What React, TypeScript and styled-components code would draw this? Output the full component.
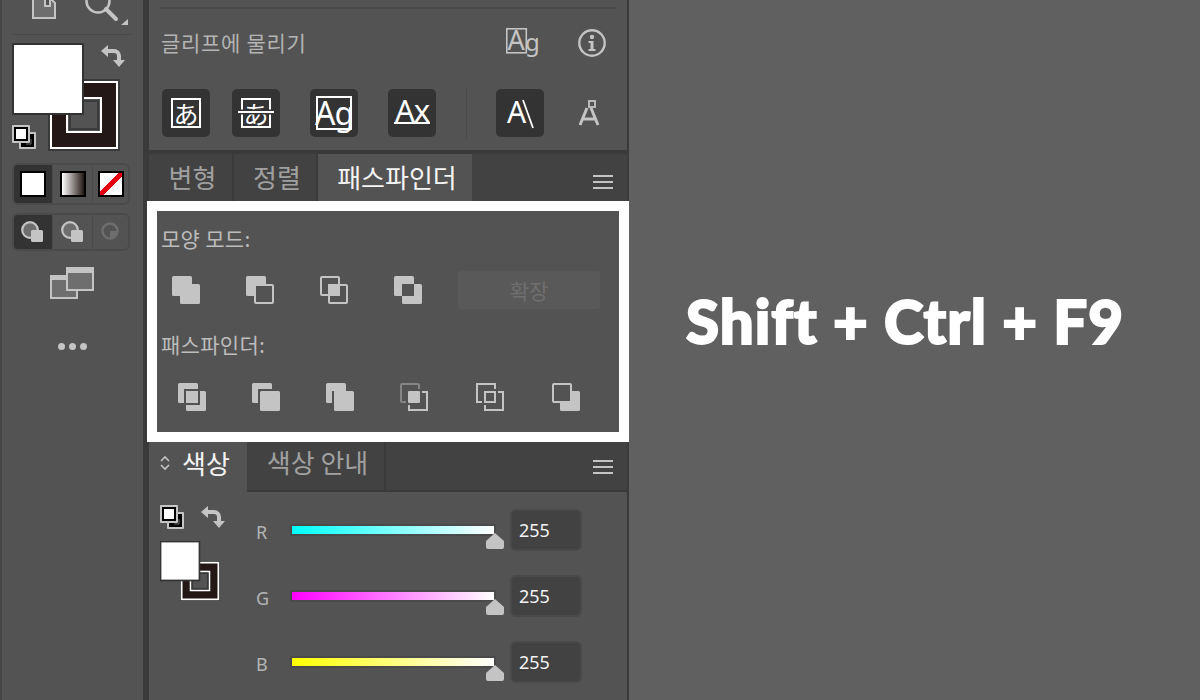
import React from 'react';
import styled, { createGlobalStyle } from 'styled-components';

const ICON = '#c4c4c4';
const PANEL = '#535353';
const FONT = '"Noto Sans CJK KR", "Noto Sans", sans-serif';

const GlobalStyle = createGlobalStyle`
html, body {
    margin: 0;
    padding: 0;
    background: #606060;
}
* {
    box-sizing: border-box;
}
`;

const Page = styled.div`
display: flex;
width: 1200px;
height: 700px;
overflow: hidden;
background: #606060;
font-family: ${FONT};
`;

/* left tool column */
const Toolbar = styled.div`
display: flex;
flex-direction: column;
flex: none;
width: 143px;
padding-left: 12px;
background: ${PANEL};
border-left: 2px solid #454545;
`;

const TopTools = styled.div`
display: flex;
height: 35px;
padding-left: 20px;
gap: 25px;
border-bottom: 1px solid #4a4a4a;
width: 120px;
margin-left: -2px;
`;

const Wells = styled.div`
position: relative;
margin: 8px 0 0 -2px;
width: 120px;
height: 108px;
`;

const SwapSlot = styled.div`
position: absolute;
left: 89px;
top: 1px;
line-height: 0;
`;

const DefaultSlot = styled.div`
position: absolute;
left: 0;
top: 82px;
line-height: 0;
`;

const Segments = styled.div<{ $height: number; $top: number }>`
display: grid;
grid-template-columns: 38px 40px 1fr;
width: 118px;
height: ${p => p.$height}px;
margin: ${p => p.$top}px 0 0 -2px;
border: 2px solid #4a4a4a;
border-radius: 6px;
overflow: hidden;
`;

const Segment = styled.div<{ $active?: boolean }>`
display: flex;
align-items: center;
justify-content: center;
background: ${p => (p.$active ? '#333333' : 'transparent')};
border-left: ${p => (p.$active ? 'none' : '1px solid #4a4a4a')};
`;

const ModeSwatch = styled.div<{ $kind: 'color' | 'gradient' | 'none' }>`
width: 26px;
height: 26px;
border: 2px solid #000;
background: ${p =>
        p.$kind === 'gradient'
            ? 'linear-gradient(90deg, #fff, #231815)'
            : p.$kind === 'none'
                ? 'linear-gradient(to bottom right, #fff 0 41%, #e60012 41% 59%, #fff 59%)'
                : '#fff'};
`;

const ScreenSlot = styled.div`
margin: 16px 0 0 36px;
line-height: 0;
`;

const Dots = styled.div`
display: flex;
gap: 4px;
margin: 44px 0 0 44px;
`;

const Dot = styled.span`
width: 7px;
height: 7px;
border-radius: 50%;
background: ${ICON};
`;

const Gutter = styled.div`
flex: none;
width: 6px;
background: #3a3a3a;
`;

/* middle panels */
const Panels = styled.div`
display: flex;
flex-direction: column;
flex: none;
width: 480px;
padding-right: 2px;
background: #3a3a3a;
`;

const CharPanel = styled.div`
flex: none;
height: 150px;
padding: 7px 11px 0 11px;
background: ${PANEL};
margin-bottom: 4px;
`;

const CharRule = styled.div`
height: 2px;
background: #4a4a4a;
`;

const CharHead = styled.div`
display: flex;
align-items: center;
height: 52px;
margin-top: 8px;
font-size: 21px;
color: #b4b4b4;
`;

const CharTitle = styled.span`
flex: 1;
margin-left: 1px;
padding-bottom: 2px;
letter-spacing: 0.7px;
`;

const InfoIcon = styled.div`
display: flex;
margin-left: 40px;
margin-right: 10px;
`;

const CharButtons = styled.div`
display: flex;
align-items: center;
margin: 18px 0 0 2px;
`;

const GlyphButton = styled.div<{ $gap?: number; $bare?: boolean }>`
display: flex;
align-items: center;
justify-content: center;
flex: none;
width: 48px;
height: 48px;
margin-left: ${p => p.$gap || 0}px;
border-radius: 5px;
background: ${p => (p.$bare ? 'transparent' : '#333333')};
`;

const KanaFrame = styled.div`
position: relative;
display: flex;
align-items: center;
justify-content: center;
width: 30px;
height: 30px;
border: 2px solid #fff;
color: #fff;
font-family: "Noto Sans CJK JP", sans-serif;
font-size: 25px;
line-height: 1;
`;

const LatinFrame = styled.div<{ $frame?: boolean; $size: number; $lift?: number }>`
position: relative;
display: flex;
align-items: center;
justify-content: center;
width: 36px;
height: 34px;
padding-bottom: ${p => p.$lift || 0}px;
border: ${p => (p.$frame ? '2px solid #fff' : 'none')};
color: #fff;
font-family: "Noto Sans", sans-serif;
font-size: ${p => p.$size}px;
letter-spacing: -1px;
line-height: 1;
`;

const Strike = styled.span`
position: absolute;
left: -5px;
right: -5px;
top: 11px;
height: 2px;
background: #fff;
box-shadow: 0 0 0 1.5px #333;
`;

const Underline = styled.span`
position: absolute;
left: 0;
right: 0;
bottom: 6px;
height: 2px;
background: #fff;
`;

const ButtonRule = styled.div`
flex: none;
width: 1px;
height: 52px;
margin: 0 29px 0 30px;
background: #4a4a4a;
`;

const TabBar = styled.div<{ $height: number }>`
display: flex;
align-items: stretch;
flex: none;
height: ${p => p.$height}px;
background: #424242;
`;

const Tab = styled.div<{ $active?: boolean; $width: number; $lift?: number }>`
display: flex;
align-items: center;
justify-content: center;
flex: none;
width: ${p => p.$width}px;
padding-left: 4px;
padding-bottom: ${p => p.$lift || 2}px;
background: ${p => (p.$active ? PANEL : 'transparent')};
border-right: ${p => (p.$active ? 'none' : '2px solid #3a3a3a')};
color: ${p => (p.$active ? '#f4f4f4' : '#a0a0a0')};
font-size: 26px;
line-height: 1;
`;

const MenuSlot = styled.div<{ $top: number }>`
display: flex;
align-items: center;
margin: ${p => p.$top}px 14px 0 auto;
`;

const PathBox = styled.div`
flex: none;
width: 482px;
height: 241px;
margin-left: -2px;
padding: 15px 4px 0;
border: 10px solid #fff;
background: ${PANEL};
`;

const GroupLabel = styled.div<{ $top?: number }>`
height: 24px;
margin-top: ${p => p.$top || 0}px;
color: #bcbcbc;
font-size: 21px;
line-height: 24px;
letter-spacing: 0.3px;
`;

const ShapeRow = styled.div`
display: flex;
align-items: center;
gap: 46px;
height: 38px;
margin-top: 21px;
padding-left: 11px;
`;

const ExpandButton = styled.div`
display: flex;
align-items: center;
justify-content: center;
width: 142px;
height: 38px;
margin-left: -10px;
border-radius: 3px;
background: #595959;
color: #6f6f6f;
font-size: 21px;
`;

const FinderRow = styled.div`
display: grid;
grid-template-columns: 74px 74px 74px 76px 76px 28px;
margin-top: 27px;
padding-left: 17px;
`;

const ColorPanel = styled.div`
flex: 1;
background: ${PANEL};
`;

const ColorTabs = styled(TabBar)`
border-bottom: 2px solid #3a3a3a;
`;

const ActiveColorTab = styled(Tab)`
justify-content: flex-start;
margin-bottom: -2px;
padding-left: 11px;
gap: 12px;
`;

const ColorBody = styled.div`
display: flex;
padding: 13px 0 0 11px;
`;

const ColorTools = styled.div`
display: flex;
flex-direction: column;
width: 90px;
flex: none;
`;

const ColorToolRow = styled.div`
display: flex;
gap: 17px;
line-height: 0;
margin-bottom: 12px;
`;

const Sliders = styled.div`
display: flex;
flex-direction: column;
gap: 24px;
padding-top: 4px;
`;

const SliderRow = styled.div`
display: flex;
align-items: flex-start;
height: 42px;
`;

const SliderLabel = styled.div`
width: 40px;
padding: 11px 0 0 6px;
color: #b4b4b4;
font-family: "Noto Sans", sans-serif;
font-size: 18px;
line-height: 24px;
`;

const Track = styled.div<{ $from: string }>`
position: relative;
width: 206px;
height: 12px;
margin-top: 15px;
border: 2px solid #4a4a4a;
background: linear-gradient(90deg, ${p => p.$from}, #fff);
background-clip: padding-box;
`;

const Thumb = styled.div`
position: absolute;
right: -10px;
top: 7px;
line-height: 0;
`;

const ValueBox = styled.div`
display: flex;
align-items: center;
width: 72px;
height: 42px;
margin-left: 14px;
padding-left: 7px;
border: 2px solid #494949;
border-radius: 6px;
background: #424242;
color: #f2f2f2;
font-family: "Noto Sans", sans-serif;
font-size: 18px;
`;

const Stage = styled.div`
flex: 1;
padding: 285px 0 0 57px;
`;

const Shortcut = styled.div`
color: #fff;
font-family: "Lato", sans-serif;
font-weight: 900;
font-size: 60px;
line-height: 72px;
letter-spacing: 1px;
white-space: nowrap;
-webkit-text-stroke: 2px #fff;
`;

/* drawings */
const SwapArrow = () => (
    <svg width="24" height="24" viewBox="0 0 24 24" fill={ICON}>
        <path d="M0 7 7 1v4h6a7 7 0 0 1 7 7v4h4l-6 7-6-7h4v-4a3 3 0 0 0-3-3H7v4z" />
    </svg>
);

const DefaultColors = () => (
    <svg width="24" height="24" viewBox="0 0 24 24">
        <rect x="7" y="7" width="17" height="17" rx="1" fill={ICON} />
        <rect x="9" y="9" width="13" height="13" fill="#000" />
        <path d="M19 14v5h-5" fill="none" stroke="#6a6a6a" strokeWidth="1" />
        <rect width="18" height="18" rx="1" fill={ICON} />
        <rect x="2" y="2" width="14" height="14" fill="#000" />
        <rect x="4" y="4" width="10" height="10" fill="#fff" />
    </svg>
);

const FillStroke = ({ size, weight = 2 }: { size: number; weight?: number }) => (
    <svg width={size} height={size} viewBox="0 0 108 108">
        <rect x="36" y="36" width="72" height="72" fill="#3a3a3a" />
        <rect x="38" y="38" width="68" height="68" fill="#231815" />
        <rect x="39" y="39" width="66" height="66" fill="none" stroke="#fff" strokeWidth={weight} />
        <rect x="55" y="55" width="34" height="34" fill={PANEL} stroke="#fff" strokeWidth={weight} />
        <rect x="58" y="58" width="28" height="28" fill="none" stroke="#3a3a3a" strokeWidth={weight} />
        <rect x="1" y="1" width="70" height="70" fill="#fff" stroke="#333" strokeWidth={weight} />
    </svg>
);

const MenuLines = () => (
    <svg width="20" height="14" viewBox="0 0 20 14" fill={ICON}>
        <rect width="20" height="2" />
        <rect y="6" width="20" height="2" />
        <rect y="12" width="20" height="2" />
    </svg>
);

const UpDown = () => (
    <svg width="10" height="16" viewBox="0 0 10 16" fill="none" stroke={ICON} strokeWidth="1.6">
        <path d="M1 6l4-4 4 4M1 10l4 4 4-4" />
    </svg>
);

const DrawMode = ({ kind }: { kind: 'normal' | 'behind' | 'inside' }) => {
    if (kind === 'inside') {
        return (
            <svg width="20" height="20" viewBox="0 0 20 20">
                <circle cx="9" cy="9" r="7.5" fill="none" stroke="#6e6e6e" strokeWidth="2.4" />
                <path d="M9 9h8a8 8 0 0 1-8 8z" fill="#6e6e6e" />
            </svg>
        );
    }
    return (
        <svg width="24" height="22" viewBox="0 0 24 22">
            <circle cx="9" cy="9" r="7.8" fill="#6e6e6e" stroke={ICON} strokeWidth="2.2" />
            <rect x="10" y="9" width="12" height="12" rx="1.5" fill={ICON} />
        </svg>
    );
};

const ScreenMode = () => (
    <svg width="44" height="32" viewBox="0 0 44 32">
        <rect x="1" y="9" width="26" height="22" fill="#6e6e6e" stroke={ICON} strokeWidth="2" />
        <rect x="0" y="8" width="28" height="5" fill={ICON} />
        <rect x="17" y="1" width="26" height="22" fill="#6e6e6e" stroke={ICON} strokeWidth="2" />
        <rect x="16" y="0" width="28" height="6" rx="1" fill={ICON} />
    </svg>
);

const A = { x: 0, y: 0 };
const B = { x: 8, y: 8 };

const Solid = ({ at }: { at: { x: number; y: number } }) => (
    <rect x={at.x} y={at.y} width="20" height="20" rx="1.5" fill={ICON} />
);

const Outline = ({ at, fill = 'none' }: { at: { x: number; y: number }; fill?: string }) => (
    <rect x={at.x + 1} y={at.y + 1} width="18" height="18" rx="1" fill={fill} stroke={ICON} strokeWidth="2" />
);

const PathIcon = ({ children }: { children: React.ReactNode }) => (
    <svg width="28" height="28" viewBox="0 0 28 28">
        {children}
    </svg>
);

const shapeIcons = [
    <><Solid at={A} /><Solid at={B} /></>,
    <><Solid at={A} /><Outline at={B} fill={PANEL} /></>,
    <><Outline at={A} /><Outline at={B} /><rect x="8" y="8" width="12" height="12" fill={ICON} /></>,
    <><Solid at={A} /><Solid at={B} /><rect x="8" y="8" width="12" height="12" fill={PANEL} /></>,
];

const finderIcons = [
    <><Solid at={A} /><Solid at={B} /><rect x="7" y="7" width="14" height="14" fill={ICON} stroke={PANEL} strokeWidth="2" /></>,
    <><Solid at={A} /><rect x="6" y="6" width="22" height="22" fill={PANEL} /><Solid at={B} /></>,
    <><Solid at={A} /><Solid at={B} /><rect x="6" y="8" width="2" height="12" fill={PANEL} /></>,
    <><rect x="1" y="1" width="18" height="18" rx="1" fill="none" stroke="#858585" strokeWidth="2" /><rect x="6" y="6" width="16" height="16" fill={PANEL} /><rect x="8" y="8" width="12" height="12" rx="1" fill={ICON} /><path d="M22 9h5v18H9v-5" fill="none" stroke={ICON} strokeWidth="2" /></>,
    <><path d="M6 19H1V1h18v5M22 9h5v18H9v-5" fill="none" stroke={ICON} strokeWidth="2" /><rect x="9" y="9" width="10" height="10" fill="none" stroke={ICON} strokeWidth="2" /></>,
    <><Solid at={B} /><Outline at={A} fill={PANEL} /></>,
];

const sliders = [
    { label: 'R', from: '#00ffff' },
    { label: 'G', from: '#ff00ff' },
    { label: 'B', from: '#ffff00' },
];

const App = () => {
    return (
        <Page>
            <GlobalStyle />
            <Toolbar>
                <TopTools>
                    <svg width="24" height="19" viewBox="0 0 24 19">
                        <path d="M1 -2v20h22V3l-5-5v8h-5V-2z" fill="#6e6e6e" stroke={ICON} strokeWidth="2" />
                    </svg>
                    <svg width="48" height="26" viewBox="0 0 48 26">
                        <circle cx="17" cy="1" r="11.5" fill="none" stroke={ICON} strokeWidth="2.5" />
                        <path d="M25 9l10 10" stroke={ICON} strokeWidth="4" strokeLinecap="round" />
                        <path d="M47 19v6h-7z" fill={ICON} />
                    </svg>
                </TopTools>
                <Wells>
                    <FillStroke size={108} />
                    <SwapSlot><SwapArrow /></SwapSlot>
                    <DefaultSlot><DefaultColors /></DefaultSlot>
                </Wells>
                <Segments $height={42} $top={12}>
                    <Segment $active><ModeSwatch $kind="color" /></Segment>
                    <Segment><ModeSwatch $kind="gradient" /></Segment>
                    <Segment><ModeSwatch $kind="none" /></Segment>
                </Segments>
                <Segments $height={38} $top={8}>
                    <Segment $active><DrawMode kind="normal" /></Segment>
                    <Segment><DrawMode kind="behind" /></Segment>
                    <Segment><DrawMode kind="inside" /></Segment>
                </Segments>
                <ScreenSlot><ScreenMode /></ScreenSlot>
                <Dots><Dot /><Dot /><Dot /></Dots>
            </Toolbar>
            <Gutter />
            <Panels>
                <CharPanel>
                    <CharRule />
                    <CharHead>
                        <CharTitle>글리프에 물리기</CharTitle>
                        <svg width="32" height="30" viewBox="0 0 32 30" overflow="visible">
                            <rect x="0.8" y="0.8" width="19.5" height="24" fill="none" stroke={ICON} strokeWidth="1.6" />
                            <text x="1.5" y="22" fontFamily="Noto Sans" fontSize="27" fill={ICON}>A</text>
                            <text x="19" y="23" fontFamily="Noto Sans" fontSize="24" fill={ICON}>g</text>
                        </svg>
                        <InfoIcon>
                            <svg width="28" height="28" viewBox="0 0 28 28">
                                <circle cx="14" cy="14" r="12.7" fill="none" stroke={ICON} strokeWidth="2.4" />
                                <circle cx="14" cy="8" r="2.2" fill={ICON} />
                                <path d="M10.5 12h5v8h2v2h-7v-2h2v-6h-2z" fill={ICON} />
                            </svg>
                        </InfoIcon>
                    </CharHead>
                    <CharButtons>
                        <GlyphButton><KanaFrame>あ</KanaFrame></GlyphButton>
                        <GlyphButton $gap={22}><KanaFrame>あ<Strike /></KanaFrame></GlyphButton>
                        <GlyphButton $gap={30}><LatinFrame $frame $size={32}>Ag</LatinFrame></GlyphButton>
                        <GlyphButton $gap={30}><LatinFrame $size={31} $lift={6}>Ax<Underline /></LatinFrame></GlyphButton>
                        <ButtonRule />
                        <GlyphButton>
                            <svg width="36" height="34" viewBox="0 0 36 34" fill="#fff" overflow="visible">
                                <text x="5" y="27" fontFamily="Noto Sans" fontSize="30">A</text>
                                <path d="M21 4l10 28" fill="none" stroke="#fff" strokeWidth="1.8" />
                            </svg>
                        </GlyphButton>
                        <GlyphButton $gap={21} $bare>
                            <svg width="22" height="26" viewBox="0 0 22 26" fill="none" stroke={ICON}>
                                <path d="M2 25 9 8M20 25l-7-17M5 19h12" strokeWidth="3" />
                                <rect x="11" y="1" width="6" height="6" strokeWidth="1.8" />
                            </svg>
                        </GlyphButton>
                    </CharButtons>
                </CharPanel>
                <TabBar $height={47}>
                    <Tab $width={85}>변형</Tab>
                    <Tab $width={84}>정렬</Tab>
                    <Tab $active $width={154}>패스파인더</Tab>
                    <MenuSlot $top={8}><MenuLines /></MenuSlot>
                </TabBar>
                <PathBox>
                    <GroupLabel>모양 모드:</GroupLabel>
                    <ShapeRow>
                        {shapeIcons.map((icon, i) => <PathIcon key={i}>{icon}</PathIcon>)}
                        <ExpandButton>확장</ExpandButton>
                    </ShapeRow>
                    <GroupLabel $top={23}>패스파인더:</GroupLabel>
                    <FinderRow>
                        {finderIcons.map((icon, i) => <PathIcon key={i}>{icon}</PathIcon>)}
                    </FinderRow>
                </PathBox>
                <ColorPanel>
                    <ColorTabs $height={50}>
                        <ActiveColorTab $active $width={98} $lift={8}>
                            <UpDown />색상
                        </ActiveColorTab>
                        <Tab $width={139} $lift={8}>색상 안내</Tab>
                        <MenuSlot $top={2}><MenuLines /></MenuSlot>
                    </ColorTabs>
                    <ColorBody>
                        <ColorTools>
                            <ColorToolRow>
                                <DefaultColors />
                                <SwapArrow />
                            </ColorToolRow>
                            <FillStroke size={60} weight={3} />
                        </ColorTools>
                        <Sliders>
                            {sliders.map(s => (
                                <SliderRow key={s.label}>
                                    <SliderLabel>{s.label}</SliderLabel>
                                    <Track $from={s.from}>
                                        <Thumb>
                                            <svg width="18" height="16" viewBox="0 0 18 16">
                                                <path d="M9 0l9 8v6a2 2 0 0 1-2 2H2a2 2 0 0 1-2-2V8z" fill={ICON} />
                                            </svg>
                                        </Thumb>
                                    </Track>
                                    <ValueBox>255</ValueBox>
                                </SliderRow>
                            ))}
                        </Sliders>
                    </ColorBody>
                </ColorPanel>
            </Panels>
            <Stage>
                <Shortcut>Shift + Ctrl + F9</Shortcut>
            </Stage>
        </Page>
    );
};

export default App;
